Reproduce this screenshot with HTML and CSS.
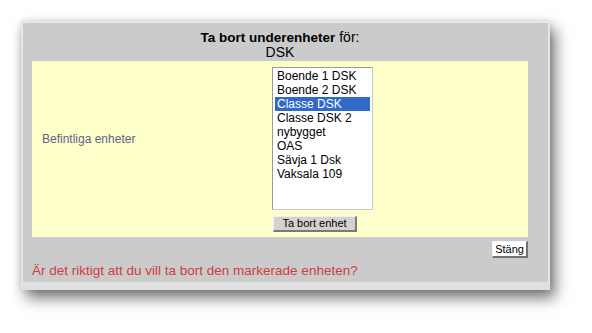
FILE: index.html
```html
<!DOCTYPE html>
<html lang="sv">
<head>
<meta charset="utf-8">
<title>Ta bort underenheter</title>
<link rel="stylesheet" href="styles.css">
</head>
<body>
<div class="panel">
  <div class="inner">
    <div class="head"><b class="head-strong">Ta bort underenheter</b> för:<br>DSK</div>
    <div class="form">
      <div class="label">Befintliga enheter</div>
      <div class="listbox">
        <div class="item">Boende 1 DSK</div>
        <div class="item">Boende 2 DSK</div>
        <div class="item selected">Classe DSK</div>
        <div class="item">Classe DSK 2</div>
        <div class="item">nybygget</div>
        <div class="item">OAS</div>
        <div class="item">Sävja 1 Dsk</div>
        <div class="item">Vaksala 109</div>
      </div>
      <div class="spacer"></div>
      <div class="btn-cell"><button class="btn-remove">Ta bort enhet</button></div>
    </div>
    <div class="actions"><button class="btn-close">Stäng</button></div>
    <p class="warn">Är det riktigt att du vill ta bort den markerade enheten?</p>
  </div>
</div>
</body>
</html>
```
FILE: styles.css
```css
html, body {
  margin: 0;
  padding: 0;
  background: #ffffff;
  font-family: "Liberation Sans", Arial, sans-serif;
}
body {
  padding: 21px 0 0 21px;
  min-height: 312px;
}
.panel {
  width: 525px;
  border: 2px solid #e6e6e6;
  border-bottom: 8px solid #e0e0e0;
  box-shadow: 5px 8px 14px rgba(0, 0, 0, 0.55), 0 0 6px rgba(0, 0, 0, 0.12);
}
.inner {
  background: #cbcbcb;
  padding: 0 20px 2px 9px;
}
.head {
  height: 31px;
  padding-top: 7px;
  text-align: center;
  font-size: 14px;
  line-height: 15px;
  color: #000;
}
.head-strong {
  font-size: 13.5px;
}
.form {
  background: #ffffcc;
  display: grid;
  grid-template-columns: 240px auto;
  align-items: center;
  padding: 6px 0 5px 0;
}
.label {
  padding-left: 10px;
  font-size: 12px;
  color: #62628a;
}
.listbox {
  width: 95px;
  height: 139px;
  background: #fff;
  border: 1px solid #9a9a9a;
  border-right-color: #c8c8c8;
  border-bottom-color: #c8c8c8;
  padding: 1px 2px;
  justify-self: start;
}
.item {
  font-size: 12px;
  line-height: 14px;
  padding-left: 2px;
  color: #000;
  white-space: nowrap;
}
.item.selected {
  background: #3169c6;
  color: #fff;
}
.btn-cell {
  padding-top: 6px;
  padding-left: 1px;
}
.btn-remove {
  display: block;
  width: 84px;
  height: 16px;
  padding: 0;
  margin: 0;
  font-family: "Liberation Sans", Arial, sans-serif;
  font-size: 11px;
  line-height: 13px;
  color: #000;
  background: #d4d2cf;
  border: 1px solid #efefef;
  border-right: 2px solid #7a7a7a;
  border-bottom: 2px solid #7a7a7a;
}
.actions {
  display: flex;
  justify-content: flex-end;
  padding-top: 4px;
}
.btn-close {
  width: 36px;
  height: 17px;
  padding: 0;
  margin: 0;
  font-family: "Liberation Sans", Arial, sans-serif;
  font-size: 11px;
  line-height: 13px;
  color: #000;
  background: #fff;
  border: 1px solid #f4f4f4;
  border-right: 2px solid #707070;
  border-bottom: 2px solid #707070;
}
.warn {
  margin: 4px 0 0 0;
  font-size: 13.5px;
  line-height: 18px;
  color: #cf3d42;
}
```
